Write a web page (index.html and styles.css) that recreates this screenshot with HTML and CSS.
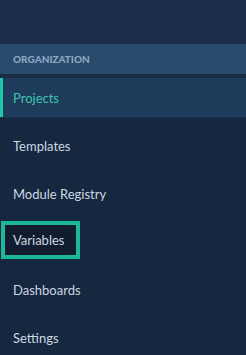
FILE: index.html
```html
<!DOCTYPE html>
<html lang="en">
<head>
    <meta charset="UTF-8">
    <meta name="viewport" content="width=device-width, initial-scale=1.0">
    <title>Organization</title>
    <link rel="stylesheet" href="styles.css">
</head>
<body>
    <aside class="sidebar">
        <div class="top-space"></div>
        <div class="section-title">ORGANIZATION</div>
        <nav class="nav">
            <a class="nav-item active" href="#">Projects</a>
            <a class="nav-item" href="#">Templates</a>
            <a class="nav-item" href="#">Module Registry</a>
            <div class="nav-row">
                <a class="nav-item outlined" href="#">Variables</a>
            </div>
            <a class="nav-item" href="#">Dashboards</a>
            <a class="nav-item" href="#">Settings</a>
        </nav>
    </aside>
</body>
</html>
```

FILE: styles.css
```css
body {
    margin: 0;
    font-family: Lato, "Open Sans", sans-serif;
    background: #15283f;
    overflow: hidden;
}

.sidebar {
    width: 246px;
    height: 355px;
    background: #15283f;
}

.top-space {
    height: 44px;
    background: #1a2e4a;
}

.section-title {
    height: 34px;
    box-sizing: border-box;
    padding-left: 13px;
    display: flex;
    align-items: center;
    background: #284a6d;
    border-bottom: 4px solid #172b45;
    font-size: 10px;
    font-weight: 900;
    color: #8fa7c2;
}

.nav {
    display: flex;
    flex-direction: column;
    gap: 8px;
}

.nav-item {
    height: 40px;
    display: flex;
    align-items: center;
    padding-left: 13px;
    font-size: 13px;
    color: #cdd6e1;
    text-decoration: none;
}

.nav-item.active {
    box-sizing: border-box;
    background: #1e3b5c;
    color: #3fc4b1;
    box-shadow: inset 3px 0 0 #1fc7a8;
    border-bottom: 1px solid #17304d;
}

.nav-row {
    height: 40px;
    display: flex;
    align-items: flex-start;
}

.nav-item.outlined {
    box-sizing: border-box;
    width: 79px;
    height: 38px;
    margin-left: 1px;
    margin-top: -1px;
    padding-left: 8px;
    border: 4px solid #1db79c;
    background: #111c30;
}
```
